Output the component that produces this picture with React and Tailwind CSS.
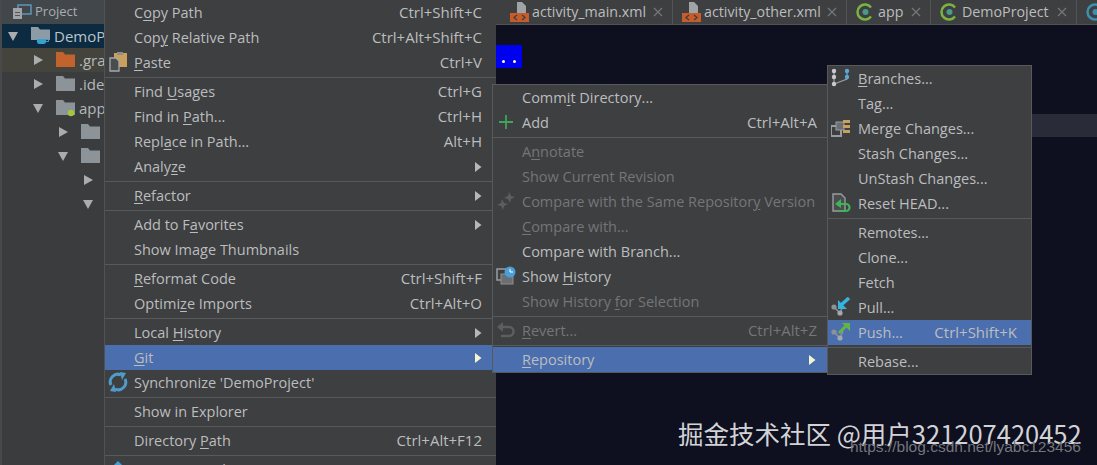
import React from "react";

const font = { fontFamily: '"Open Sans", "Noto Sans", sans-serif' };

const Arrow = ({ down }) => (
  <svg width="12" height="12" viewBox="0 0 12 12" className="shrink-0">
    <polygon points={down ? "1,2 11,2 6,11" : "2,1 11,6 2,11"} fill="#a9adb0" />
  </svg>
);

const Folder = ({ color = "#8c9499", children }) => (
  <svg width="19" height="17" viewBox="0 0 19 17" className="shrink-0">
    <path d="M0 0h7l2 2.500h10V15H0z" fill={color} />
    {children}
  </svg>
);

const TreeRow = ({ indent, down, folder, text, cls = "" }) => (
  <div className={"flex items-center h-6 whitespace-nowrap overflow-hidden text-[15px] text-[#b4b8ba] " + cls} style={{ paddingLeft: indent }}>
    <Arrow down={down} />
    <div className="ml-[12px] mr-[4px] flex">{folder}</div>
    {text}
  </div>
);

const Sidebar = () => (
  <div className="w-[104px] shrink-0 bg-[#3b3c3e] border-l-2 border-[#47494b]">
    <div className="h-6 flex items-center gap-[3px] pl-[10px] bg-[#42474c] text-[13px] text-[#a9adb0]">
      <svg width="20" height="16" viewBox="0 0 20 16">
        <rect x="6" y="1" width="13" height="9" fill="none" stroke="#5e97b5" strokeWidth="1.500" />
        <rect x="1" y="4" width="9" height="11" fill="#a0a4a6" />
        <rect x="3" y="8" width="5" height="1" fill="#555" />
        <rect x="3" y="11" width="5" height="1" fill="#555" />
      </svg>
      Project
    </div>
    <div className="flex items-center h-6 pl-[5px] bg-[#0d2b40] text-[15px] text-[#b9c4cc] overflow-hidden whitespace-nowrap">
      <Arrow down />
      <div className="ml-[12px] mr-[4px] flex">
        <svg width="19" height="18" viewBox="0 0 19 18">
          <path d="M0 0h7l2 2.500h10V13H0z" fill="#8c9ba6" />
          <path d="M6 12h9v2.500a2.500 2.500 0 0 1-2.500 2.500h-4A2.500 2.500 0 0 1 6 14.500z" fill="#3aa0d0" />
          <path d="M15 12.500h2.500v2H15" fill="none" stroke="#3aa0d0" />
        </svg>
      </div>
      DemoP
    </div>
    <TreeRow indent={30} folder={<Folder color="#c2622d" />} text=".gra" cls="bg-[#45443c]" />
    <TreeRow indent={30} folder={<Folder />} text=".ide" />
    <TreeRow indent={30} down text="app" folder={
      <Folder><circle cx="15" cy="13" r="3.200" fill="#a4c639" /></Folder>
    } />
    <TreeRow indent={55} folder={<Folder />} />
    <TreeRow indent={55} down folder={<Folder />} />
    <div className="h-6 flex items-center pl-[80px]"><Arrow /></div>
    <div className="h-6 flex items-center pl-[80px]"><Arrow down /></div>
  </div>
);

const Sep = () => (
  <div className="h-1 flex items-center"><div className="h-px w-full bg-[#58595a]" /></div>
);

// one menu line, icon column + label + shortcut or submenu arrow
const Item = ({ icon, children, keys, sub, off, on, left = 29, pad = 14 }) => (
  <div className={"relative h-[25px] flex items-center whitespace-nowrap text-[14.500px] " + (on ? "bg-[#4b6eaf] " : "") + (off ? "text-[#747678]" : "text-[#bbbdbe]")} style={{ paddingLeft: left, paddingRight: pad }}>
    {icon && <div className="absolute left-[2px] top-[1px] w-[22px] h-[22px] flex items-center justify-center">{icon}</div>}
    <span className="flex-1">{children}</span>
    {keys && <span className="text-[15px]">{keys}</span>}
    {sub && (
      <svg width="8" height="12" viewBox="0 0 8 12">
        <polygon points="1,1 7.500,6 1,11" fill={on ? "#f4f4d0" : "#b5b7b8"} />
      </svg>
    )}
  </div>
);

const U = ({ children }) => <span className="underline underline-offset-2 decoration-1">{children}</span>;

const Paste = () => (
  <svg width="19" height="20" viewBox="0 0 19 20">
    <rect x="5" y="1" width="13" height="14" fill="#c9a05c" />
    <rect x="8" y="0" width="6" height="3" fill="#8c8f90" />
    <path d="M1 6h6l3 3v10H1z" fill="#4a4c4e" stroke="#a5a8aa" strokeWidth="1.300" />
  </svg>
);
const Sync = () => (
  <svg width="20" height="20" viewBox="0 0 20 20" fill="none" stroke="#4f9ccc" strokeWidth="3">
    <path d="M3 13A7.500 7.500 0 0 1 13 3" />
    <path d="M17 7A7.500 7.500 0 0 1 7 17" />
    <polygon points="12,0 18,1 14,8" fill="#4f9ccc" stroke="none" />
    <polygon points="8,20 2,19 6,12" fill="#4f9ccc" stroke="none" />
  </svg>
);
const Plus = () => (
  <svg width="16" height="16" viewBox="0 0 16 16"><path d="M8 1v14M1 8h14" stroke="#3fa45c" strokeWidth="1.800" /></svg>
);
const Stars = () => (
  <svg width="18" height="18" viewBox="0 0 18 18" fill="#5c5e60">
    <polygon points="12,0 14,4 18,5 14,7 13,11 11,7 7,6 11,4" />
    <polygon points="5,7 7,11 11,12 7,14 6,18 4,14 0,13 4,11" />
  </svg>
);
const History = () => (
  <svg width="20" height="20" viewBox="0 0 20 20">
    <rect x="1" y="3" width="12" height="11" fill="none" stroke="#9a9d9f" strokeWidth="1.500" />
    <rect x="5" y="8" width="12" height="10" fill="#6c6f71" stroke="#8c8f90" />
    <circle cx="14" cy="6" r="5.500" fill="#4a9fd6" />
    <path d="M14 3v3h3" fill="none" stroke="#fff" />
  </svg>
);
const Revert = () => (
  <svg width="18" height="16" viewBox="0 0 18 16" fill="none" stroke="#5c5e60" strokeWidth="2.500">
    <path d="M3 5h9a4 4 0 0 1 0 9H4" />
    <polygon points="0,5 6,0 6,10" fill="#5c5e60" stroke="none" />
  </svg>
);
const Branches = () => (
  <svg width="20" height="20" viewBox="0 0 20 20" fill="#c9cbcc">
    <path d="M3 2v15M3 16l13-5V3" fill="none" stroke="#9a9d9f" strokeWidth="1.200" />
    <circle cx="3" cy="3" r="2.200" /><circle cx="3" cy="9" r="2.200" /><circle cx="3" cy="16" r="2.200" />
    <circle cx="16" cy="3" r="2.200" fill="#5aa6d6" /><circle cx="16" cy="9" r="2.200" fill="#5aa6d6" />
  </svg>
);
const Merge = () => (
  <svg width="20" height="18" viewBox="0 0 20 18">
    <rect x="0" y="7" width="10" height="10" fill="none" stroke="#9a9d9f" strokeWidth="2" />
    <rect x="5" y="3" width="8" height="8" fill="#6c6f71" stroke="#9a9d9f" />
    <rect x="12" y="1" width="7" height="3" fill="#c9a05c" />
    <rect x="12" y="6" width="7" height="3" fill="#c9a05c" />
    <rect x="12" y="11" width="7" height="3" fill="#c9a05c" />
  </svg>
);
const Reset = () => (
  <svg width="19" height="20" viewBox="0 0 19 20">
    <path d="M1 1h8l4 4v13H1z" fill="#4a4c4e" stroke="#9a9d9f" strokeWidth="1.400" />
    <path d="M6 11h8a3.500 3.500 0 0 1 0 7H7" fill="none" stroke="#3fb457" strokeWidth="2.200" />
    <polygon points="3,11 9,6 9,15" fill="#3fb457" />
  </svg>
);
const Vcs = ({ color, push }) => (
  <svg width="20" height="20" viewBox="0 0 20 20">
    <path d="M3 10l6 6 3-7" fill="none" stroke="#8c9296" strokeWidth="1.500" />
    <circle cx="3" cy="10" r="2.600" fill="#8c9296" /><circle cx="9" cy="16" r="2.600" fill="#a3a8ab" />
    {push ? (
      <>
        <path d="M8 11l8-8" stroke={color} strokeWidth="3" />
        <polygon points="11,1 19,1 19,9" fill={color} />
      </>
    ) : (
      <>
        <path d="M18 1l-9 8" stroke={color} strokeWidth="3.500" />
        <polygon points="7,3 7,12 16,12" fill={color} />
      </>
    )}
  </svg>
);
const CompareArrow = () => (
  <svg width="16" height="16" viewBox="0 0 16 16"><polygon points="8,0 14,6 10,6 10,16 6,16 6,6 2,6" fill="#3f9fd6" /></svg>
);

const MainMenu = () => (
  <div className="w-[392px] shrink-0 h-[465px] overflow-hidden bg-[#3e3f41] border-l border-[#505254]">
    <Item keys="Ctrl+Shift+C">C<U>o</U>py Path</Item>
    <Item keys="Ctrl+Alt+Shift+C">Cop<U>y</U> Relative Path</Item>
    <Item icon={<Paste />} keys="Ctrl+V"><U>P</U>aste</Item>
    <Sep />
    <Item keys="Ctrl+G">Find <U>U</U>sages</Item>
    <Item keys="Ctrl+H">Find in <U>P</U>ath...</Item>
    <Item keys="Alt+H">Repl<U>a</U>ce in Path...</Item>
    <Item sub>Analy<U>z</U>e</Item>
    <Sep />
    <Item sub><U>R</U>efactor</Item>
    <Sep />
    <Item sub>Add to F<U>a</U>vorites</Item>
    <Item>Show Image Thumbnails</Item>
    <Sep />
    <Item keys="Ctrl+Shift+F"><U>R</U>eformat Code</Item>
    <Item keys="Ctrl+Alt+O">Optimi<U>z</U>e Imports</Item>
    <Sep />
    <Item sub>Local <U>H</U>istory</Item>
    <Item sub on><U>G</U>it</Item>
    <Item icon={<Sync />}>Synchronize 'DemoProject'</Item>
    <Sep />
    <Item>Show in Explorer</Item>
    <Sep />
    <Item keys="Ctrl+Alt+F12">Directory <U>P</U>ath</Item>
    <Sep />
    <Item icon={<CompareArrow />}>Compare With...</Item>
  </div>
);

const GitMenu = () => (
  <div className="absolute left-[492px] top-[84px] w-[336px] h-[289px] bg-[#3e3f41] border border-[#58595a]">
    <Item pad={10}>Comm<U>i</U>t Directory...</Item>
    <Item pad={10} icon={<Plus />} keys="Ctrl+Alt+A">Add</Item>
    <Sep />
    <Item off>A<U>n</U>notate</Item>
    <Item off>Show Current Revision</Item>
    <Item off icon={<Stars />}>Compare with the Same Repositor<U>y</U> Version</Item>
    <Item off><U>C</U>ompare with...</Item>
    <Item>Compare with Branch...</Item>
    <Item icon={<History />}>Show <U>H</U>istory</Item>
    <Item off>Show History <U>f</U>or Selection</Item>
    <Sep />
    <Item pad={10} off icon={<Revert />} keys="Ctrl+Alt+Z"><U>R</U>evert...</Item>
    <Sep />
    <Item pad={11} sub on><U>R</U>epository</Item>
  </div>
);

const RepoMenu = () => (
  <div className="absolute left-[827px] top-[65px] w-[205px] h-[310px] bg-[#3e3f41] border border-[#58595a]">
    <Item left={30} icon={<Branches />}><U>B</U>ranches...</Item>
    <Item left={30}>Tag...</Item>
    <Item left={30} icon={<Merge />}>Merge Changes...</Item>
    <Item left={30}>Stash Changes...</Item>
    <Item left={30}>UnStash Changes...</Item>
    <Item left={30} icon={<Reset />}>Reset HEAD...</Item>
    <Sep />
    <Item left={30}>Remotes...</Item>
    <Item left={30}>Clone...</Item>
    <Item left={30}>Fetch</Item>
    <Item left={30} icon={<Vcs color="#35b4e0" />}>Pull...</Item>
    <Item left={30} on icon={<Vcs push color="#62b543" />} keys="Ctrl+Shift+K">Push...</Item>
    <Sep />
    <Item left={30}>Rebase...</Item>
  </div>
);

const Xml = () => (
  <svg width="19" height="22" viewBox="0 0 19 22" className="shrink-0">
    <path d="M7 1h5l4 4v8H7z" fill="#a0a4a6" />
    <rect x="0" y="12" width="19" height="9" fill="#c75c2a" />
    <path d="M7 14l-3 2.500 3 2.500M12 14l3 2.500-3 2.500" fill="none" stroke="#3c3f41" strokeWidth="1.300" />
  </svg>
);
const Gradle = ({ color = "#7cb342", dot = "#4a9a88" }) => (
  <svg width="18" height="18" viewBox="0 0 18 18" className="shrink-0">
    <path d="M15 4.500A7.500 7.500 0 1 0 15 13.500" fill="none" stroke={color} strokeWidth="2.500" />
    <circle cx="9.500" cy="9" r="3" fill={dot} />
  </svg>
);
const Close = () => (
  <svg width="10" height="10" viewBox="0 0 10 10" className="shrink-0"><path d="M1 1l8 8M9 1l-8 8" stroke="#73777a" strokeWidth="1.300" /></svg>
);

const Tab = ({ icon, text, gap, width }) => (
  <div className="h-[24px] flex items-center border-r border-[#515355] pl-[9px] shrink-0 whitespace-nowrap" style={{ width }}>
    {icon}
    <span className="text-[14.250px] text-[#bbbdbe]" style={{ marginLeft: gap }}>{text}</span>
    <div className="ml-auto mr-[9px]"><Close /></div>
  </div>
);

const App = () => (
  <div className="relative flex w-[1097px] h-[465px] overflow-hidden bg-[#0e0f1f]" style={font}>
    <Sidebar />
    <MainMenu />
    <div className="flex-1 min-w-0">
      <div className="h-[25px] flex bg-[#3e3f41] border-b border-[#505254] pl-[5px] overflow-hidden">
        <Tab icon={<Xml />} text="activity_main.xml" gap={3} width={172} />
        <Tab icon={<Xml />} text="activity_other.xml" gap={3} width={174} />
        <Tab icon={<Gradle />} text="app" gap={4} width={84} />
        <Tab icon={<Gradle />} text="DemoProject" gap={4} width={146} />
        <div className="pl-[9px] flex items-center shrink-0"><Gradle color="#3d8fb0" dot="#3d8fb0" /></div>
      </div>
      <div className="mt-5 w-[26px] h-[23px] bg-[#0000f0] flex items-end justify-center gap-2 pb-[5px]">
        <div className="w-[3px] h-[3px] bg-white rounded-full" />
        <div className="w-[3px] h-[3px] bg-white rounded-full" />
      </div>
      <div className="mt-[46px] h-[23px] bg-[#2a2b38]" />
    </div>
    <GitMenu />
    <RepoMenu />
    <div className="absolute left-[678px] top-[416px] text-[25.500px] leading-[34px] text-[#d2d3d6] whitespace-nowrap" style={{ fontFamily: '"Noto Sans CJK SC", "Noto Sans", sans-serif' }}>
      掘金技术社区 @用户321207420452
    </div>
    <div className="absolute left-[850px] top-[436px] text-[15.500px] leading-[22px] text-[#75767c] whitespace-nowrap" style={{ fontFamily: '"Liberation Sans", sans-serif' }}>
      https://blog.csdn.net/lyabc123456
    </div>
  </div>
);

export default App;
